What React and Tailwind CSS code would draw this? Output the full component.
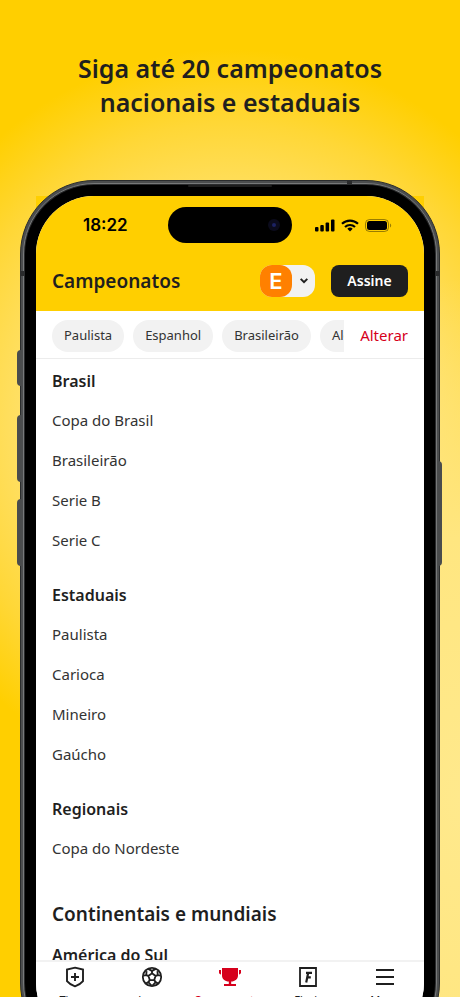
import React from 'react';

const chips = ['Paulista', 'Espanhol', 'Brasileirão', 'Alemão'];

const groups = [
  { title: 'Brasil', items: ['Copa do Brasil', 'Brasileirão', 'Serie B', 'Serie C'] },
  { title: 'Estaduais', items: ['Paulista', 'Carioca', 'Mineiro', 'Gaúcho'] },
  { title: 'Regionais', items: ['Copa do Nordeste'] },
];

function ShieldIcon() {
  return (
    <svg width="24" height="24" viewBox="0 0 24 24" fill="none" stroke="currentColor" strokeWidth="1.900">
      <path d="M12 2.700 20 4.600V16.200C18 18.700 15 20.300 12 21.300 9 20.300 6 18.700 4 16.200V4.600z" />
      <path d="M12 8v8M8 12h8" />
    </svg>
  );
}

function BallIcon() {
  return (
    <svg width="24" height="24" viewBox="0 0 24 24" fill="none" stroke="currentColor" strokeWidth="1.800">
      <circle cx="12" cy="12" r="9.200" />
      <path d="M12 8.300l3.600 2.600-1.400 4.200H9.800l-1.400-4.200z" />
      <path d="M12 8.300V5.800M15.600 10.900l2.300-.8M14.200 15.100l1.500 2M9.800 15.100l-1.500 2M8.400 10.900l-2.300-.8" />
      <path d="M8.200 3.900 12 5.900l3.800-2M21 10.500l-3.200-.4-.4-3.900M18.300 18.600l-2.600-1.500-3.200 3.500M5.700 18.600l2.600-1.500 3.200 3.500M3 10.500l3.200-.4.400-3.900" />
    </svg>
  );
}

function TrophyIcon() {
  return (
    <svg width="24" height="24" viewBox="0 0 24 24" fill="currentColor">
      <path d="M4 3h16v7.500c0 3.600-3 5.800-6.800 6.100V19H18v2H6v-2h4.800v-2.400C7 16.300 4 14.100 4 10.500z" />
      <path d="M1 5h2v4.500C1.800 9.300 1 8.500 1 7.500zM21 5h2v2.500c0 1-.8 1.800-2 2z" />
    </svg>
  );
}

function FlashIcon() {
  return (
    <svg width="24" height="24" viewBox="0 0 24 24" fill="none" stroke="currentColor" strokeWidth="1.800">
      <path d="M4 3h16v18H4z" />
      <path d="M10 7.800H16M12.200 7.800 10.200 17.500M11.400 12.400h3.400" strokeWidth="2.200" />
    </svg>
  );
}

function MenuIcon() {
  return (
    <svg width="24" height="24" viewBox="0 0 24 24" fill="none" stroke="currentColor" strokeWidth="2">
      <path d="M3 5h18M3 12h18M3 19h18" />
    </svg>
  );
}

const tabs = [
  { label: 'Times', Icon: ShieldIcon },
  { label: 'Jogos', Icon: BallIcon },
  { label: 'Campeonatos', Icon: TrophyIcon, active: true },
  { label: 'Flash', Icon: FlashIcon },
  { label: 'Menu', Icon: MenuIcon },
];

function StatusBar() {
  return (
    <div className="grid h-[58px] grid-cols-[1fr_124px_1fr] items-center text-black">
      <span className="pl-[47px] font-[Inter] text-[17px] leading-6 font-semibold">18:22</span>
      <div className="flex h-9 items-center justify-end rounded-full bg-black pr-3">
        <span className="flex size-3 items-center justify-center rounded-full bg-[#0b0b1c]">
          <span className="size-1 rounded-full bg-[#1c2263]" />
        </span>
      </div>
      <div className="flex items-center justify-end gap-[6px] pr-8">
        <svg width="20" height="13" viewBox="0 0 20 13" fill="currentColor">
          <rect x="0" y="8" width="3.500" height="4.500" rx="1" />
          <rect x="5.300" y="6" width="3.500" height="6.500" rx="1" />
          <rect x="10.600" y="3.500" width="3.500" height="9" rx="1" />
          <rect x="16" y="0.500" width="3.500" height="12" rx="1" />
        </svg>
        <svg width="18" height="13" viewBox="0 0 18 13" fill="none" stroke="currentColor" strokeWidth="2.200">
          <path d="M1 4.800a11.500 11.500 0 0 1 16 0M4 8a7.200 7.200 0 0 1 10 0" />
          <path d="M9 12.500 6.300 9.800a4 4 0 0 1 5.400 0z" fill="currentColor" stroke="none" />
        </svg>
        <svg width="27" height="13" viewBox="0 0 27 13">
          <rect x="0.500" y="0.500" width="23" height="12" rx="4" fill="none" stroke="#000" strokeOpacity="0.400" />
          <rect x="2" y="2" width="20" height="9" rx="2.500" fill="#000" />
          <path d="M25 4.500c1.600.6 1.600 3.400 0 4z" fill="#000" fillOpacity="0.400" />
        </svg>
      </div>
    </div>
  );
}

function Header() {
  return (
    <header className="flex h-[57px] items-center pr-4 pb-[3px] pl-4">
      <h2 className="flex-1 text-[19px] font-semibold">Campeonatos</h2>
      <button aria-label="Trocar edição" className="mr-4 flex h-8 w-[55px] items-center rounded-xl bg-[#f2f2f2]">
        <span className="flex size-8 items-center justify-center rounded-xl bg-[#ff8000] font-[Inter] text-[22px] font-semibold text-white">E</span>
        <svg className="mx-auto" width="8" height="6" viewBox="0 0 8 6" fill="none" stroke="currentColor" strokeWidth="2">
          <path d="M.7.900 4 4.200 7.300.900" />
        </svg>
      </button>
      <button className="h-8 w-[77px] rounded-lg bg-[#1f1f1f] text-sm font-semibold text-white">Assine</button>
    </header>
  );
}

function FilterBar() {
  return (
    <div className="flex h-12 shrink-0 items-center border-b border-[#ececec] pt-0.5 pl-4">
      <div className="flex min-w-0 flex-1 gap-[9px] overflow-hidden">
        {chips.map((chip) => (
          <button key={chip} className="h-8 shrink-0 rounded-full bg-[#f2f2f2] px-3 text-[13px] text-[#333]">
            {chip}
          </button>
        ))}
      </div>
      <button className="px-4 text-[15px] text-[#d6001c]">Alterar</button>
    </div>
  );
}

function TabBar() {
  return (
    <nav className="flex h-[81px] shrink-0 border-t-2 border-[#f2f2f2] bg-white">
      {tabs.map(({ label, Icon, active }) => (
        <a
          key={label}
          href="#"
          className={
            active
              ? 'flex flex-1 flex-col items-center pt-[3px] text-[#d6001c]'
              : 'flex flex-1 flex-col items-center pt-[3px] text-[#1f1f1f]'
          }
        >
          <Icon />
          <span className="pt-[3px] text-[11px] leading-4">{label}</span>
        </a>
      ))}
    </nav>
  );
}

function App() {
  return (
    <div className="flex h-screen flex-col overflow-hidden bg-[#ffcf00] bg-[radial-gradient(ellipse_260px_520px_at_100%_80%,#ffe98c_0%,#ffe680_50%,transparent_100%),radial-gradient(ellipse_356px_370px_at_50%_42%,#ffe477_0%,#ffe16c_55%,#ffd736_80%,transparent_100%)] font-['Noto_Sans',sans-serif] text-[#1f1f1f]">
      <h1 className="px-8 pt-[51px] text-center text-[25px] leading-[34px] font-semibold">
        Siga até 20 campeonatos
        <br />
        nacionais e estaduais
      </h1>

      <div className="relative isolate mx-5 mt-[61px] -mb-[60px] flex min-h-0 flex-1 flex-col">
        {/* screen corners that peek out behind the frame */}
        <div className="absolute inset-x-4 top-4 -z-10 h-20 bg-[#ffcf00]" />
        {/* side keys */}
        <div className="absolute top-[170px] -left-[3px] h-9 w-1 rounded-l-sm bg-[#4a4c4d]" />
        <div className="absolute top-[235px] -left-[3px] h-[67px] w-1 rounded-l-sm bg-[#4a4c4d]" />
        <div className="absolute top-[319px] -left-[3px] h-[67px] w-1 rounded-l-sm bg-[#4a4c4d]" />
        <div className="absolute top-[281px] -right-[2px] h-[105px] w-1 rounded-r-sm bg-[#4a4c4d]" />
        {/* antenna bands and earpiece */}
        <div className="absolute top-[91px] left-0 h-[5px] w-1 bg-[#2a2b2c]" />
        <div className="absolute top-[91px] right-0 h-[5px] w-1 bg-[#2a2b2c]" />
        <div className="absolute top-px right-[88px] h-[3px] w-[5px] bg-[#2a2b2c]" />
        <div className="absolute inset-x-[168px] top-[5px] h-[2px] rounded-full bg-[#1c1c1c]" />

        <div className="-z-[1] flex min-h-0 flex-1 flex-col rounded-[74px] border border-[#2b2d2e] bg-[#4b4d4e] p-[2px]">
          <div className="flex min-h-0 flex-1 flex-col rounded-[71px] border border-[#77797a] bg-[#2a2b2c] p-px">
            <div className="flex min-h-0 flex-1 flex-col rounded-[69px] bg-black p-[11px]">
              <div className="flex min-h-0 flex-1 flex-col overflow-hidden rounded-[58px] bg-white">
                <div className="bg-[#ffcf00]">
                  <StatusBar />
                  <Header />
                </div>
                <FilterBar />
                <main className="min-h-0 flex-1 overflow-hidden px-4 pt-[3px]">
                  {groups.map((group) => (
                    <section key={group.title} className="mb-4">
                      <h3 className="text-base leading-[38px] font-semibold">{group.title}</h3>
                      <ul>
                        {group.items.map((item) => (
                          <li key={item}>
                            <a href="#" className="block text-[15px] leading-10 text-[#333]">{item}</a>
                          </li>
                        ))}
                      </ul>
                    </section>
                  ))}
                  <h2 className="pt-2 text-[19px] leading-11 font-semibold">Continentais e mundiais</h2>
                  <h3 className="text-base leading-[38px] font-semibold">América do Sul</h3>
                </main>
                <TabBar />
              </div>
            </div>
          </div>
        </div>
      </div>
    </div>
  );
}

export default App;
